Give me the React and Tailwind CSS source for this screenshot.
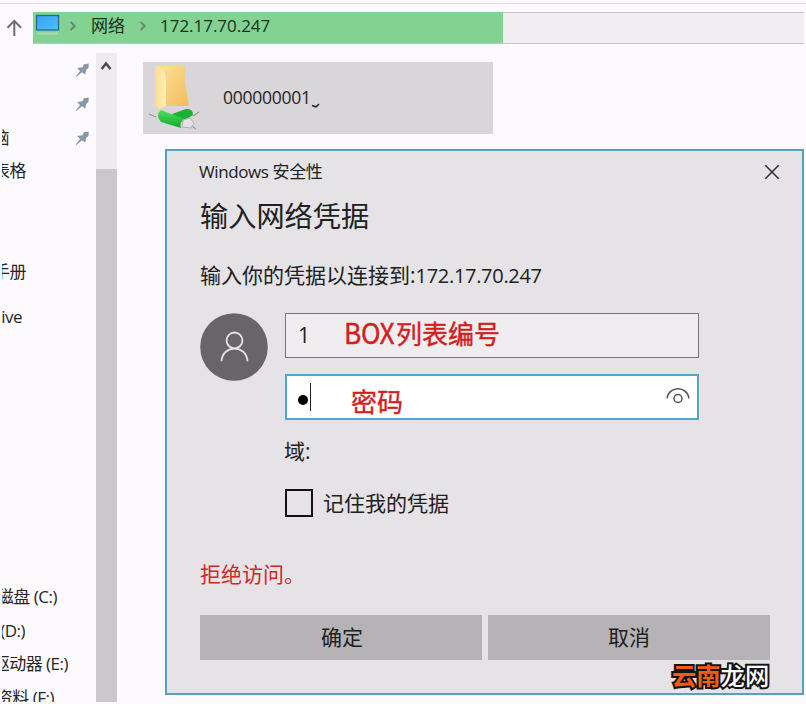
const ui = 'font-["Open_Sans","Noto_Sans_CJK_SC",sans-serif]';

function Pin() {
  return (
    <svg width="15" height="15" viewBox="0 0 16 16" className="block">
      <path d="M9.5 1.2 14.6 0.6 14.4 5.2 11.8 7.4 11 12.2 7.4 9.8 1.4 15 0.8 14.4 5.4 8.4 2.2 5.2 8 4.4Z" fill="#8798a8" />
    </svg>
  );
}

function Chevron() {
  return (
    <svg width="8" height="10" viewBox="0 0 8 10" className="block shrink-0" fill="none">
      <path d="M1.6 1 5.8 5 1.6 9" stroke="#6b8570" strokeWidth="1.8" />
    </svg>
  );
}

function NavLabel({ box, children }) {
  return (
    <div className={`flex shrink-0 justify-end overflow-hidden whitespace-nowrap ml-[2px] h-6 leading-6 text-[17px] tracking-[-0.5px] text-[#252525] ${box}`}>
      <span className="shrink-0">{children}</span>
    </div>
  );
}

function AddressBar() {
  return (
    <header className="flex h-[41px] shrink-0 border-t border-[#dedcdf]">
      <div className="w-[33px] pl-[6px] pt-[15px]">
        <svg width="17" height="18" viewBox="0 0 17 18" fill="none" stroke="#6c6c6c" strokeWidth="2">
          <path d="M8.3 17V2M1.5 8.7 8.3 1.8l6.8 6.9" />
        </svg>
      </div>
      <div className="mt-[8px] flex h-[32px] w-[771px] border-y border-[#c5c3c6] bg-[#f0eef0]">
        <div className="-my-px flex h-[31px] w-[470px] items-center bg-[#82d292] pb-[3px] text-[17px] text-[#183020]">
          <svg width="25" height="22" viewBox="0 0 25 22" className="ml-[2px] -mt-[4px] shrink-0">
            <defs>
              <linearGradient id="screen" x1="0" y1="0" x2="1" y2="1">
                <stop offset="0" stopColor="#3b9df0" />
                <stop offset="1" stopColor="#4bc3ff" />
              </linearGradient>
            </defs>
            <rect x="1.5" y="2.5" width="22" height="14.5" fill="url(#screen)" stroke="#256894" strokeWidth="1.3" />
            <path d="M2 20.5h21" stroke="#a8dcae" strokeWidth="2" />
          </svg>
          <div className="ml-[9px]"><Chevron /></div>
          <span className="ml-[14px] w-[34px]">网络</span>
          <div className="ml-[14px]"><Chevron /></div>
          <span className="ml-[13px] tracking-[-0.03px]">172.17.70.247</span>
        </div>
      </div>
    </header>
  );
}

function Sidebar() {
  return (
    <aside className="flex h-[649px] w-[117px] shrink-0 overflow-hidden">
      <div className="flex w-[96px] flex-col">
        <div className="flex h-[26px] shrink-0 items-start pl-[75px] pt-[10px]"><Pin /></div>
        <div className="flex h-[46px] shrink-0 items-start pl-[75px] pt-[18px]"><Pin /></div>
        <div className="flex h-[26px] shrink-0 items-center">
          <NavLabel box="w-[7px]">电脑</NavLabel>
          <div className="ml-[66px]"><Pin /></div>
        </div>
        <NavLabel box="w-[24px] mt-[8px]">表格</NavLabel>
        <NavLabel box="w-[24px] mt-[77px]">手册</NavLabel>
        <NavLabel box="w-[20px] mt-[21px]">OneDrive</NavLabel>
        <NavLabel box="w-[55px] mt-[256px]">本地磁盘 (C:)</NavLabel>
        <NavLabel box="w-[23px] mt-[10px]">软件 (D:)</NavLabel>
        <NavLabel box="w-[66px] mt-[9px]">CD 驱动器 (E:)</NavLabel>
        <NavLabel box="w-[52px] mt-[10px]">资料 (F:)</NavLabel>
      </div>
      <div className="flex w-[21px] flex-col bg-[#edebed]">
        <svg width="21" height="116" viewBox="0 0 21 116" fill="none" className="block shrink-0">
          <path d="M5.7 16 10 10.4 14.5 16" stroke="#474747" strokeWidth="2.4" />
        </svg>
        <div className="flex-1 bg-[#cac8ca]" />
      </div>
    </aside>
  );
}

function NetworkFolder() {
  return (
    <svg width="52" height="70" viewBox="0 0 52 70" className="ml-[5px] shrink-0">
      <defs>
        <linearGradient id="back" x1="0" y1="0" x2="1" y2="1">
          <stop offset="0" stopColor="#ffe19a" />
          <stop offset="1" stopColor="#f1bd5d" />
        </linearGradient>
        <linearGradient id="front" x1="0" y1="0" x2="1" y2="0">
          <stop offset="0" stopColor="#ffdd88" />
          <stop offset="1" stopColor="#fff0b8" />
        </linearGradient>
        <linearGradient id="pipe" x1="0" y1="0" x2="0" y2="1">
          <stop offset="0" stopColor="#4ce05f" />
          <stop offset="1" stopColor="#16a62f" />
        </linearGradient>
      </defs>
      <path d="M8 3H37V20L41 43 17 43 8 10Z" fill="url(#back)" />
      <path d="M7 2 16 7 18 15V43L12 46 7 43Z" fill="url(#front)" />
      <path d="M1 51 8 54M45 53 51 49M40 60 48 66" stroke="#9b999b" strokeWidth="1.1" />
      <path d="M24 51 38 46Q45 45 45 52L34 59Z" fill="#1cb136" />
      <path d="M13 47 36 56Q31 60 33 65L13 59Q7 52 13 47Z" fill="url(#pipe)" />
      <path d="M35 57 42 55 46 60 43 65 34 64Z" fill="#e5e3e5" stroke="#b5b3b5" strokeWidth="1" />
    </svg>
  );
}

function Credentials() {
  return (
    <section className="ml-[48px] mt-[15px] flex h-[546px] w-[639px] flex-col border-2 border-[#5b9fbd] bg-[#e5e3e5] pl-[33px] text-[#202020]">
      <div className="mt-[7px] flex h-[28px] items-center justify-between pr-[22px]">
        <span className="-ml-px text-[17px] leading-7 tracking-[-0.4px]">Windows 安全性</span>
        <svg width="16" height="16" viewBox="0 0 16 16" fill="none" stroke="#303030" strokeWidth="1.5">
          <path d="m1.3 1.3 13.4 13.4M14.7 1.3 1.3 14.7" />
        </svg>
      </div>
      <h1 className="mt-[8px] h-[44px] text-[28.2px] leading-[44px]">输入网络凭据</h1>
      <p className="mt-[22px] h-[30px] whitespace-nowrap text-[21px] leading-[30px]">
        输入你的凭据以连接到:<span className="text-[20px] tracking-[-0.3px]">172.17.70.247</span>
      </p>
      <div className="mt-[23px] flex gap-[17px]">
        <svg width="68" height="68" viewBox="0 0 67 67" className="block shrink-0">
          <circle cx="33.5" cy="33.5" r="33.3" fill="#676567" />
          <g fill="none" stroke="#e4e2e4" strokeWidth="1.8">
            <circle cx="34" cy="27" r="7.8" />
            <path d="M21.2 47.5C22 31 46 31 46.8 47.5" />
          </g>
        </svg>
        <div className="flex w-[414px] flex-col">
          <div className="flex h-[45px] items-center border border-[#777577] bg-[#efedef] pl-[12px]">
            <span className="w-[46px] pt-[1px] text-[21px]">1</span>
            <span className="-mt-[5px] flex items-baseline whitespace-nowrap text-[26px] leading-9 text-[#d31e20] [-webkit-text-stroke:0.4px_#d31e20]">
              <span className='inline-block w-[52px] origin-left scale-x-[0.94] font-["Noto_Sans_CJK_SC",sans-serif] text-[28px] tracking-[-0.4px]'>BOX</span>
              <span>列表编号</span>
            </span>
          </div>
          <div className="mt-[16px] flex h-[46px] items-center border-2 border-[#54a5cc] bg-white pl-[11px]">
            <div className="mt-[6px] size-[10px] rounded-full bg-black" />
            <div className="ml-[2px] h-[28px] w-px bg-[#202020]" />
            <span className="ml-[40px] mt-[10px] text-[26px] leading-8 text-[#d31e20] [-webkit-text-stroke:0.4px_#d31e20]">密码</span>
            <svg width="24" height="17" viewBox="0 0 24 17" className="ml-auto mr-[7px] -mt-[3px]" fill="none" stroke="#555355" strokeWidth="1.5">
              <path d="M1 11.5C3-1.5 21-1.5 23 11.5" />
              <circle cx="12" cy="11.5" r="4" />
            </svg>
          </div>
          <span className="-ml-px mt-[16px] h-[30px] text-[21px] leading-[30px]">域:</span>
          <div className="mt-[22px] flex h-[30px] items-center">
            <div className="size-[28px] border-2 border-[#111]" />
            <span className="ml-[10px] text-[21px] leading-[30px]">记住我的凭据</span>
          </div>
        </div>
      </div>
      <p className="mt-[41px] h-[30px] text-[21px] leading-[30px] text-[#cf282b]">拒绝访问。</p>
      <div className="mt-[26px] flex gap-[6px] text-[21px]">
        <button className="h-[45px] w-[282px] bg-[#b5b3b5] pl-[2px]">确定</button>
        <button className="h-[45px] w-[282px] bg-[#b5b3b5]">取消</button>
      </div>
    </section>
  );
}

export default function App() {
  return (
    <div className={`${ui} relative flex h-[704px] w-[806px] flex-col overflow-hidden bg-[#fcfafd] pt-[3px]`}>
      <AddressBar />
      <div className="flex pt-[9px]">
        <Sidebar />
        <main className="flex flex-col">
          <div className="ml-[26px] mt-[9px] flex h-[72px] w-[350px] items-center bg-[#d8d6d8] text-[17.5px] text-[#252525]">
            <NetworkFolder />
            <span className="-mt-[2px] ml-[23px] tracking-[-0.25px]">000000001</span>
            <svg width="9" height="5" viewBox="0 0 9 5" className="mt-[14px]" fill="none">
              <path d="M1 2.5 5 3.8 8 1" stroke="#222" strokeWidth="1.5" />
            </svg>
          </div>
          <Credentials />
        </main>
      </div>
      <div className="absolute left-[672px] top-[658px] whitespace-nowrap text-[24.3px] font-bold leading-[36px] [paint-order:stroke_fill] [-webkit-text-stroke:4px_#171310]">
        <span className="text-[#f25c19]">云南</span><span className="font-medium text-white">龙网</span>
      </div>
    </div>
  );
}
